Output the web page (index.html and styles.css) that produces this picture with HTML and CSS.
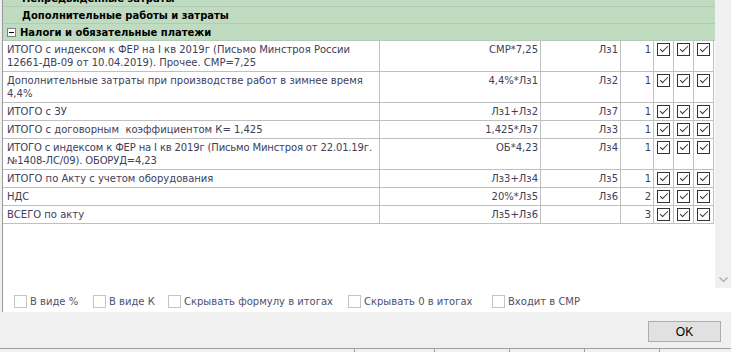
FILE: index.html
```html
<!DOCTYPE html>
<html lang="ru">
<head>
    <meta charset="UTF-8">
    <title>Лимитированные затраты</title>
    <link rel="stylesheet" href="styles.css">
</head>
<body>
    <div class="panel">
        <!-- Grid -->
        <div class="grid-wrap">
            <div class="grid">
                <div class="rows">
                    <div class="group">Непредвиденные затраты</div>
                    <div class="group">Дополнительные работы и затраты</div>
                    <div class="group group-open"><span class="toggle"></span>Налоги и обязательные платежи</div>

                    <div class="row">
                        <div class="cell name">ИТОГО с индексом к ФЕР на I кв 2019г (Письмо Минстроя России<br>12661-ДВ-09 от 10.04.2019). Прочее. СМР=7,25</div>
                        <div class="cell num">СМР*7,25</div>
                        <div class="cell num">Лз1</div>
                        <div class="cell num">1</div>
                        <div class="cell chk"><span class="box"></span></div>
                        <div class="cell chk"><span class="box"></span></div>
                        <div class="cell chk"><span class="box"></span></div>
                    </div>
                    <div class="row">
                        <div class="cell name">Дополнительные затраты при производстве работ в зимнее время<br>4,4%</div>
                        <div class="cell num">4,4%*Лз1</div>
                        <div class="cell num">Лз2</div>
                        <div class="cell num">1</div>
                        <div class="cell chk"><span class="box"></span></div>
                        <div class="cell chk"><span class="box"></span></div>
                        <div class="cell chk"><span class="box"></span></div>
                    </div>
                    <div class="row">
                        <div class="cell name">ИТОГО с ЗУ</div>
                        <div class="cell num">Лз1+Лз2</div>
                        <div class="cell num">Лз7</div>
                        <div class="cell num">1</div>
                        <div class="cell chk"><span class="box"></span></div>
                        <div class="cell chk"><span class="box"></span></div>
                        <div class="cell chk"><span class="box"></span></div>
                    </div>
                    <div class="row">
                        <div class="cell name">ИТОГО с договорным&nbsp; коэффициентом К= 1,425</div>
                        <div class="cell num">1,425*Лз7</div>
                        <div class="cell num">Лз3</div>
                        <div class="cell num">1</div>
                        <div class="cell chk"><span class="box"></span></div>
                        <div class="cell chk"><span class="box"></span></div>
                        <div class="cell chk"><span class="box"></span></div>
                    </div>
                    <div class="row">
                        <div class="cell name long">ИТОГО с индексом к ФЕР на I кв 2019г (Письмо Минстроя от 22.01.19г.<br>№1408-ЛС/09). ОБОРУД=4,23</div>
                        <div class="cell num">ОБ*4,23</div>
                        <div class="cell num">Лз4</div>
                        <div class="cell num">1</div>
                        <div class="cell chk"><span class="box"></span></div>
                        <div class="cell chk"><span class="box"></span></div>
                        <div class="cell chk"><span class="box"></span></div>
                    </div>
                    <div class="row">
                        <div class="cell name">ИТОГО по Акту с учетом оборудования</div>
                        <div class="cell num">Лз3+Лз4</div>
                        <div class="cell num">Лз5</div>
                        <div class="cell num">1</div>
                        <div class="cell chk"><span class="box"></span></div>
                        <div class="cell chk"><span class="box"></span></div>
                        <div class="cell chk"><span class="box"></span></div>
                    </div>
                    <div class="row">
                        <div class="cell name">НДС</div>
                        <div class="cell num">20%*Лз5</div>
                        <div class="cell num">Лз6</div>
                        <div class="cell num">2</div>
                        <div class="cell chk"><span class="box"></span></div>
                        <div class="cell chk"><span class="box"></span></div>
                        <div class="cell chk"><span class="box"></span></div>
                    </div>
                    <div class="row">
                        <div class="cell name">ВСЕГО по акту</div>
                        <div class="cell num">Лз5+Лз6</div>
                        <div class="cell num"></div>
                        <div class="cell num">3</div>
                        <div class="cell chk"><span class="box"></span></div>
                        <div class="cell chk"><span class="box"></span></div>
                        <div class="cell chk"><span class="box"></span></div>
                    </div>
                </div>
            </div>
            <div class="vscroll">
                <svg class="arrow-down" width="9" height="6" viewBox="0 0 9 6">
                    <polyline points="0.5,0.5 4.5,4.5 8.5,0.5" fill="none" stroke="#a6a6a6" stroke-width="1.2"/>
                </svg>
            </div>
        </div>

        <!-- Options -->
        <div class="options">
            <label class="opt"><span class="opt-box"></span>В виде %</label>
            <label class="opt"><span class="opt-box"></span>В виде К</label>
            <label class="opt"><span class="opt-box"></span>Скрывать формулу в итогах</label>
            <label class="opt"><span class="opt-box"></span>Скрывать 0 в итогах</label>
            <label class="opt"><span class="opt-box"></span>Входит в СМР</label>
        </div>
    </div>

    <!-- Buttons -->
    <div class="buttons">
        <button class="btn">OK</button>
    </div>

    <!-- Status bar -->
    <div class="statusbar">
        <span class="sb-panel sb-wide"></span>
        <span class="sb-panel sb-80"></span>
        <span class="sb-panel"></span>
        <span class="sb-panel"></span>
        <span class="sb-panel"></span>
    </div>
</body>
</html>
```

FILE: styles.css
```css
* {
    margin: 0;
    padding: 0;
    box-sizing: border-box;
}

body {
    width: 731px;
    height: 352px;
    overflow: hidden;
    background-color: #f0f0f0;
    font-family: "DejaVu Sans", sans-serif;
    font-size: 10px;
    color: #40405a;
}

/* Panel */
.panel {
    margin-left: 2px;
    height: 312px;
    border-left: 1px solid #9a9a9a;
    background-color: #ffffff;
    display: flex;
    flex-direction: column;
}

.grid-wrap {
    display: flex;
    height: 288px;
}

.grid {
    width: 712px;
    overflow: hidden;
}

.rows {
    margin-top: -10px;
}

/* Group rows */
.group {
    height: 17px;
    padding: 2px 0 1px 19px;
    line-height: 13px;
    background-color: #c0dcc0;
    border-bottom: 1px solid #b6c9b6;
    font-weight: bold;
    color: #000000;
}

.group-open {
    display: flex;
    align-items: center;
    gap: 4px;
    padding-left: 4px;
}

.toggle {
    width: 9px;
    height: 9px;
    border: 1px solid #808080;
    background-color: #ffffff;
    display: flex;
    align-items: center;
    justify-content: center;
}

.toggle::before {
    content: "";
    width: 5px;
    height: 1px;
    background-color: #000000;
}

/* Data rows */
.row {
    display: grid;
    grid-template-columns: 377px 161px 80px 33px 20px 20px 20px;
}

.cell {
    padding: 2px 2px 2px 4px;
    line-height: 13px;
    border-right: 1px solid #c0c0c0;
    border-bottom: 1px solid #c0c0c0;
    white-space: nowrap;
}

.name.long {
    letter-spacing: -0.15px;
}

.num {
    text-align: right;
    padding-left: 0;
}

.chk {
    padding: 2px 0 0 3px;
}

.box {
    display: block;
    position: relative;
    width: 13px;
    height: 13px;
    border: 1px solid #333333;
    background-color: #ffffff;
}

.box::after {
    content: "";
    position: absolute;
    left: 2px;
    top: 2px;
    width: 7px;
    height: 3px;
    border-left: 1px solid #333333;
    border-bottom: 1px solid #333333;
    transform: rotate(-45deg);
}

/* Scrollbar */
.vscroll {
    width: 16px;
    background-color: #f0f0f0;
    display: flex;
    align-items: flex-end;
    justify-content: center;
    padding-bottom: 5px;
}

/* Options */
.options {
    height: 24px;
    padding: 2px 0 0 11px;
    display: grid;
    grid-template-columns: 79px 75px 180px 144px auto;
    align-items: center;
    color: #505070;
}

.opt {
    display: flex;
    align-items: center;
    gap: 3px;
}

.opt-box {
    width: 13px;
    height: 13px;
    border: 1px solid #c4c4c4;
    background-color: #ffffff;
}

/* Buttons */
.buttons {
    height: 36px;
    padding: 9px 10px 0 0;
    display: flex;
    justify-content: flex-end;
    align-items: flex-start;
}

.btn {
    width: 73px;
    height: 21px;
    border: 1px solid #adadad;
    background-color: #e1e1e1;
    font-family: "Liberation Sans", sans-serif;
    font-size: 12px;
    color: #000000;
}

/* Status bar */
.statusbar {
    height: 4px;
    border-top: 1px solid #a0a0a0;
    display: flex;
}

.sb-panel {
    width: 75px;
    border-right: 1px solid #a0a0a0;
}

.sb-wide {
    width: 355px;
}

.sb-80 {
    width: 80px;
}
```
